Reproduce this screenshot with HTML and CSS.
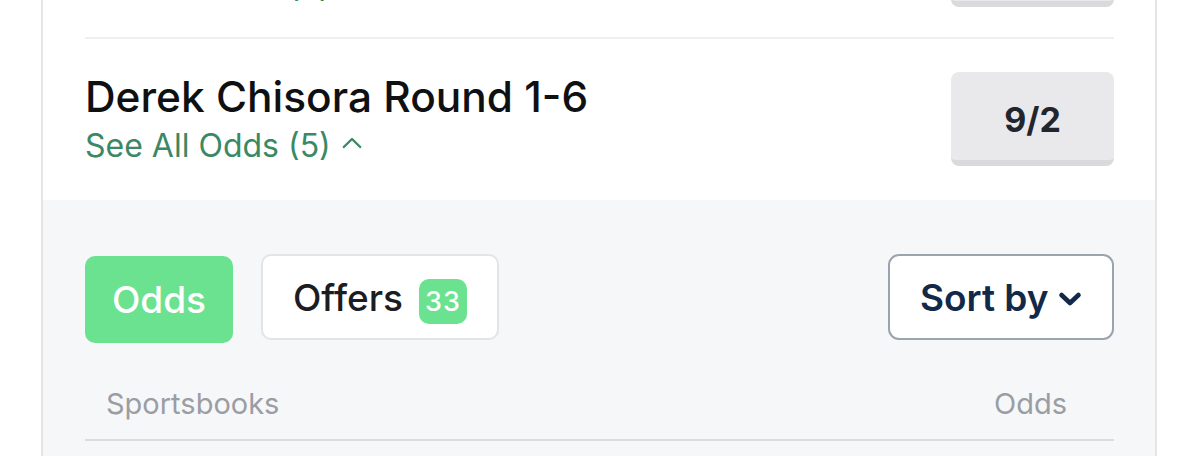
FILE: index.html
```html
<!DOCTYPE html>
<html lang="en">
<head>
<meta charset="utf-8">
<title>Odds</title>
<link rel="stylesheet" href="styles.css">
</head>
<body>
<div class="card">
  <div class="markets">
    <div class="market">
      <div class="market-info">
        <div class="market-title">Derek Chisora Round 7-12</div>
        <div class="market-link">See All Odds (5)
          <svg class="caret" width="20" height="12" viewBox="0 0 20 12"><path d="M1.8 10 L10 2 L18.2 10" fill="none" stroke="currentColor" stroke-width="2.4" stroke-linecap="round" stroke-linejoin="round"/></svg>
        </div>
      </div>
      <button class="odds-btn">7/2</button>
    </div>
    <div class="market">
      <div class="market-info">
        <div class="market-title">Derek Chisora Round 1-6</div>
        <div class="market-link">See All Odds (5)
          <svg class="caret" width="20" height="12" viewBox="0 0 20 12"><path d="M1.8 10 L10 2 L18.2 10" fill="none" stroke="currentColor" stroke-width="2.4" stroke-linecap="round" stroke-linejoin="round"/></svg>
        </div>
      </div>
      <button class="odds-btn">9/2</button>
    </div>
  </div>
  <div class="panel">
    <div class="toolbar">
      <div class="tabs">
        <button class="tab tab-active">Odds</button>
        <button class="tab tab-offers">Offers <span class="badge">33</span></button>
      </div>
      <button class="sort">Sort by
        <svg class="chev" width="24" height="16" viewBox="0 0 24 16"><path d="M3.5 4 L12 12 L20.5 4" fill="none" stroke="currentColor" stroke-width="4.6" stroke-linecap="round" stroke-linejoin="round"/></svg>
      </button>
    </div>
    <div class="table-head">
      <span>Sportsbooks</span>
      <span>Odds</span>
    </div>
  </div>
</div>
</body>
</html>
```
FILE: styles.css
```css
* { box-sizing: border-box; }
html, body { margin: 0; padding: 0; background: #ffffff; }
body {
  font-family: Inter, "Noto Sans", sans-serif;
  color: #111214;
}
button { font-family: inherit; cursor: pointer; }

.card {
  margin: -120px 0 0 41px;
  width: 1116px;
  border-left: 2px solid #e5e5e6;
  border-right: 2px solid #e5e5e6;
  background: #fff;
}

.markets { padding: 0 41px 0 42px; }

.market {
  display: flex;
  align-items: center;
  justify-content: space-between;
  padding: 33px 0 34px;
}
.market:first-child { padding-bottom: 30px; }
.market + .market { border-top: 2px solid #efeff0; }

.market-info { display: flex; flex-direction: column; }
.market-title {
  font-size: 42.4px;
  font-weight: 500;
  line-height: 48px;
  color: #0f1012;
  margin-bottom: 6px;
}
.market-link {
  font-size: 32px;
  line-height: 38px;
  color: #3b8964;
  display: flex;
  align-items: center;
}
.caret { margin-left: 11px; margin-top: -7px; }

.odds-btn {
  width: 163px;
  height: 94px;
  border: 0;
  border-bottom: 6px solid #dadadc;
  border-radius: 8px;
  background: #e9e9eb;
  font-size: 34px;
  font-weight: 700;
  color: #22252c;
  padding: 6px 0 0;
}

.panel {
  background: #f6f7f9;
  padding: 54px 41px 16px 42px;
}
.toolbar {
  display: flex;
  align-items: flex-start;
  justify-content: space-between;
}
.tabs { display: flex; align-items: flex-start; gap: 28px; }
.tab {
  height: 87px;
  border-radius: 10px;
  font-size: 37px;
  font-weight: 500;
  display: flex;
  align-items: center;
}
.tab-active {
  width: 148px;
  justify-content: center;
  background: #6be28f;
  color: #ffffff;
  border: 0;
  margin-top: 2px;
}
.tab-offers {
  background: #ffffff;
  border: 2px solid #e3e4e6;
  color: #1b1d22;
  padding: 0 30px 0 30px;
  height: 86px;
}
.badge {
  margin: 8px 0 0 16px;
  width: 48px;
  height: 45px;
  border-radius: 10px;
  background: #6be28f;
  color: #ffffff;
  font-size: 27px;
  font-weight: 500;
  letter-spacing: 1px;
  display: flex;
  align-items: center;
  justify-content: center;
}
.sort {
  height: 86px;
  width: 226px;
  border: 2px solid #9ba4ae;
  border-radius: 11px;
  background: #ffffff;
  color: #13294a;
  font-size: 37px;
  font-weight: 600;
  display: flex;
  align-items: center;
  padding: 0 0 0 30px;
}
.chev { margin-left: 9px; margin-top: 4px; }

.table-head {
  display: flex;
  justify-content: space-between;
  margin-top: 44px;
  padding: 0 47px 18px 21px;
  border-bottom: 2px solid #dcdcdf;
  font-size: 29px;
  line-height: 34px;
  color: #9b9da4;
}
```
